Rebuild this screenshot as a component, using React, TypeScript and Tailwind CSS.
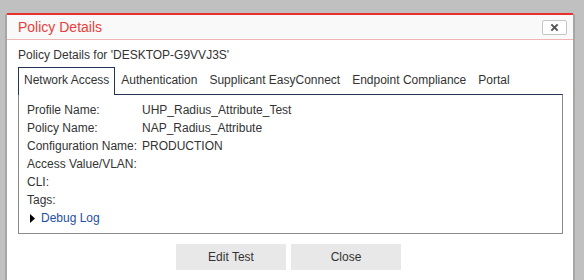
import React from 'react';

const TABS = ['Network Access', 'Authentication', 'Supplicant EasyConnect', 'Endpoint Compliance', 'Portal'];

const ROWS: [string, string][] = [
  ['Profile Name:', 'UHP_Radius_Attribute_Test'],
  ['Policy Name:', 'NAP_Radius_Attribute'],
  ['Configuration Name:', 'PRODUCTION'],
  ['Access Value/VLAN:', ''],
  ['CLI:', ''],
  ['Tags:', ''],
];

export default function App() {
  return (
    <div
      className="h-[280px] w-[584px] overflow-hidden bg-[#c0c0c0] pt-[13px] text-[12px] text-[#333]"
      style={{ fontFamily: '"Liberation Sans", Arial, sans-serif' }}
    >
      <div className="ml-[7px] h-[300px] w-[566px] bg-white shadow-[-2px_1px_0_#a6a6a6,2px_1px_0_#a6a6a6]">
        {/* header */}
        <div className="flex h-[27px] items-center justify-between border-t-2 border-b border-t-[#e8302c] border-b-[#f0b4b4] bg-[#f9f9f9] pl-[11px] pr-[6px]">
          <span className="text-[14px] leading-[24px] text-[#e8403c]">Policy Details</span>
          <button
            type="button"
            className="flex h-[15px] w-[25px] items-center justify-center rounded-[2px] border border-[#c6c6c6] bg-white"
          >
            <svg viewBox="0 0 10 10" className="h-[9px] w-[9px]">
              <path d="M1.5 1.5 L8.5 8.5 M8.5 1.5 L1.5 8.5" stroke="#555" strokeWidth="2.2" />
            </svg>
          </button>
        </div>

        {/* body */}
        <div className="pl-[11px] pr-[10px] pt-[6px]">
          <p className="mb-[3px] leading-[18px]">Policy Details for 'DESKTOP-G9VVJ3S'</p>

          <div className="relative z-10 -mb-px flex">
            {TABS.map((t, i) => (
              <div
                key={t}
                className={
                  i === 0
                    ? 'border border-b-0 border-[#233456] bg-white px-[5px] pt-[5px] pb-[8px] leading-[14px]'
                    : 'border border-b-0 border-transparent px-[5px] pt-[5px] pb-[8px] leading-[14px]'
                }
              >
                {t}
              </div>
            ))}
          </div>

          <div className="border border-[#8a8a8a] border-t-[#233456] px-[8px] pt-[6px] pb-[6px]">
            {ROWS.map(([k, v]) => (
              <div key={k} className="flex leading-[18px]">
                <span className="w-[115px] shrink-0">{k}</span>
                <span>{v}</span>
              </div>
            ))}
            <div className="flex items-center leading-[18px]">
              <svg viewBox="0 0 5 9" className="ml-[3px] mr-[6px] h-[9px] w-[5px]">
                <path d="M0 0 L5 4.5 L0 9 Z" fill="#000" />
              </svg>
              <a className="cursor-pointer text-[#1f4f9f]">Debug Log</a>
            </div>
          </div>

          <div className="mt-[10px] flex justify-center gap-[5px] pr-[4px]">
            <button type="button" className="h-[26px] w-[110px] bg-[#e8e8e8] text-[12px] text-[#333]">
              Edit Test
            </button>
            <button type="button" className="h-[26px] w-[110px] bg-[#e8e8e8] text-[12px] text-[#333]">
              Close
            </button>
          </div>
        </div>
      </div>
    </div>
  );
}
